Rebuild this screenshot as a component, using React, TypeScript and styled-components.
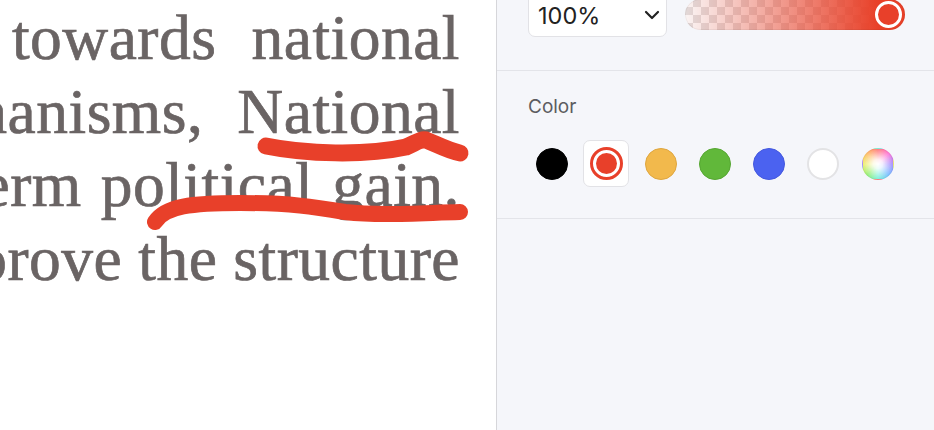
import React from "react";
import styled, { createGlobalStyle } from "styled-components";

const Global = createGlobalStyle`
  html, body { margin: 0; padding: 0; }
  body { width: 934px; height: 430px; overflow: hidden; background: #ffffff; }
  #root { width: 934px; height: 430px; }
`;

const Page = styled.div`
  display: flex;
  width: 934px;
  height: 430px;
  overflow: hidden;
`;

const Document = styled.div`
  position: relative;
  width: 496px;
  height: 430px;
  flex: none;
  background: #ffffff;
  border-right: 1px solid #d6d6da;
  overflow: hidden;
`;

const TextColumn = styled.div`
  width: 460px;
  padding-top: 1px;
  overflow: hidden;
`;

const Line = styled.div<{ $gap: number }>`
  display: flex;
  justify-content: flex-end;
  gap: ${(p) => p.$gap}px;
  white-space: nowrap;
  height: 73.5px;
  font-family: "Liberation Serif", "DejaVu Serif", serif;
  font-size: 63.5px;
  line-height: 73.5px;
  letter-spacing: 0.5px;
  color: #6a6464;
  -webkit-text-stroke: 0.7px #6a6464;
`;

const Word = styled.span`
  flex: none;
`;

const Ink = styled.svg`
  position: absolute;
  left: 0;
  top: 0;
  pointer-events: none;
`;

const Panel = styled.div`
  flex: 1;
  background: #f5f6fa;
  display: flex;
  flex-direction: column;
`;

const TopSection = styled.div`
  box-sizing: border-box;
  height: 78px;
  margin-top: -7px;
  padding: 0 29px 0 31px;
  border-bottom: 1px solid #e3e4e9;
  display: flex;
  align-items: flex-start;
  gap: 18px;
`;

const Select = styled.div`
  box-sizing: border-box;
  width: 139px;
  height: 44px;
  background: #ffffff;
  border: 1px solid #e2e2e6;
  border-radius: 7px;
  display: flex;
  align-items: center;
  justify-content: space-between;
  padding: 0 2px 0 9px;
  font-family: Inter, "Noto Sans", sans-serif;
  font-size: 23.5px;
  color: #222222;
`;

const Slider = styled.div`
  position: relative;
  margin-top: 6px;
  width: 220px;
  height: 31px;
  border-radius: 16px;
  overflow: hidden;
  background:
    linear-gradient(to right, rgba(232, 64, 40, 0.02), rgba(232, 64, 40, 1) 88%),
    repeating-conic-gradient(#e2dcdc 0% 25%, #fbf8f8 0% 50%) 0 0 / 16px 16px;
  box-shadow: inset 0 0 0 1px rgba(0, 0, 0, 0.05);
`;

const Thumb = styled.div`
  position: absolute;
  right: 3px;
  top: 2px;
  box-sizing: border-box;
  width: 27px;
  height: 27px;
  border-radius: 50%;
  border: 3.5px solid #ffffff;
  background: #e8402a;
`;

const ColorSection = styled.div`
  box-sizing: border-box;
  height: 148px;
  padding: 25px 31px 0 31px;
  border-bottom: 1px solid #e3e4e9;
`;

const Label = styled.div`
  font-family: Inter, "Noto Sans", sans-serif;
  font-size: 19px;
  line-height: 22px;
  color: #5c5c60;
`;

const Swatches = styled.div`
  display: flex;
  align-items: center;
  margin-top: 22px;
  margin-left: 1px;
  gap: 8.3px;
`;

const SwatchCell = styled.div<{ $selected?: boolean }>`
  box-sizing: border-box;
  width: 46px;
  height: 47px;
  border-radius: 7px;
  display: flex;
  align-items: center;
  justify-content: center;
  background: ${(p) => (p.$selected ? "#ffffff" : "transparent")};
  border: 1px solid ${(p) => (p.$selected ? "#e2e2e6" : "transparent")};
`;

const Dot = styled.div<{ $bg: string; $border: string; $bw?: number }>`
  box-sizing: border-box;
  width: 32px;
  height: 32px;
  border-radius: 50%;
  background: ${(p) => p.$bg};
  border: ${(p) => p.$bw ?? 1}px solid ${(p) => p.$border};
`;

const Ring = styled.div`
  box-sizing: border-box;
  width: 33px;
  height: 33px;
  border-radius: 50%;
  border: 3.5px solid #e8402a;
  padding: 3px;
  background: #ffffff;
  display: flex;
`;

const RingCore = styled.div`
  flex: 1;
  border-radius: 50%;
  background: #e8402a;
`;

const rainbow =
  "radial-gradient(circle at 50% 50%, rgba(255,255,255,1) 0%, rgba(255,255,255,0.85) 22%, rgba(255,255,255,0) 72%), conic-gradient(from 0deg, #ff7a7a, #ff7ad8, #a58cff, #7cc0ff, #7cf0dc, #9af07a, #f0ee70, #ffbd6a, #ff7a7a)";

const lines: { gap: number; words: string[] }[] = [
  { gap: 35, words: ["move", "towards", "national"] },
  { gap: 34, words: ["mechanisms,", "National"] },
  { gap: 19, words: ["short-term", "political", "gain."] },
  { gap: 16, words: ["improve", "the", "structure"] },
];

export default function App() {
  return (
    <>
      <Global />
      <Page>
        <Document>
          <TextColumn>
            {lines.map((l, i) => (
              <Line key={i} $gap={l.gap}>
                {l.words.map((w) => (
                  <Word key={w}>{w}</Word>
                ))}
              </Line>
            ))}
          </TextColumn>
          <Ink width="496" height="430" viewBox="0 0 496 430">
            <path
              d="M266 146 C305 154 365 156 406 147 C416 143 420 139 426 140 C438 145 449 151 460 153"
              fill="none"
              stroke="#e8402a"
              strokeWidth="17"
              strokeLinecap="round"
              strokeLinejoin="round"
            />
            <path
              d="M155 222 C165 206 192 203 240 203 C290 203 315 207 345 212 C380 216 420 213 460 212"
              fill="none"
              stroke="#e8402a"
              strokeWidth="16"
              strokeLinecap="round"
              strokeLinejoin="round"
            />
          </Ink>
        </Document>
        <Panel>
          <TopSection>
            <Select>
              <span>100%</span>
              <svg width="24" height="24" viewBox="0 0 24 24" fill="none" stroke="#222" strokeWidth="2.2" strokeLinecap="round" strokeLinejoin="round">
                <path d="m6 9 6 6 6-6" />
              </svg>
            </Select>
            <Slider>
              <Thumb />
            </Slider>
          </TopSection>
          <ColorSection>
            <Label>Color</Label>
            <Swatches>
              <SwatchCell>
                <Dot $bg="#000000" $border="#000000" />
              </SwatchCell>
              <SwatchCell $selected>
                <Ring>
                  <RingCore />
                </Ring>
              </SwatchCell>
              <SwatchCell>
                <Dot $bg="#f2b94c" $border="#dfa63f" />
              </SwatchCell>
              <SwatchCell>
                <Dot $bg="#61b83a" $border="#56a632" />
              </SwatchCell>
              <SwatchCell>
                <Dot $bg="#4b62f0" $border="#4458de" />
              </SwatchCell>
              <SwatchCell>
                <Dot $bg="#ffffff" $border="#e3e3e5" $bw={2} />
              </SwatchCell>
              <SwatchCell>
                <Dot $bg={rainbow} $border="rgba(0,0,0,0.04)" />
              </SwatchCell>
            </Swatches>
          </ColorSection>
        </Panel>
      </Page>
    </>
  );
}
